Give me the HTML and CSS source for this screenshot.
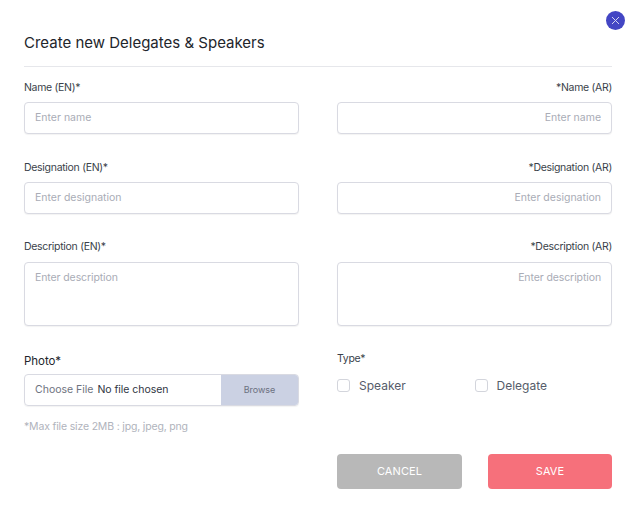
FILE: index.html
```html
<!DOCTYPE html>
<html lang="en">
<head>
<meta charset="utf-8">
<title>Create new Delegates &amp; Speakers</title>
<link rel="stylesheet" href="styles.css">
</head>
<body>
<div class="modal">
  <button class="close" type="button" aria-label="Close">
    <svg width="9" height="9" viewBox="0 0 9 9"><path d="M1 1l7 7M8 1L1 8" stroke="#d5d6f0" stroke-width="1" fill="none"/></svg>
  </button>
  <h1 class="title">Create new Delegates &amp; Speakers</h1>
  <form class="form">
    <div class="row row-a">
      <div class="field"><label class="label">Name (EN)*</label><input class="input" placeholder="Enter name"></div>
      <div class="field rtl"><label class="label">*Name (AR)</label><input class="input" placeholder="Enter name"></div>
    </div>
    <div class="row row-b">
      <div class="field"><label class="label">Designation (EN)*</label><input class="input" placeholder="Enter designation"></div>
      <div class="field rtl"><label class="label">*Designation (AR)</label><input class="input" placeholder="Enter designation"></div>
    </div>
    <div class="row row-c">
      <div class="field"><label class="label">Description (EN)*</label><textarea class="input area" placeholder="Enter description"></textarea></div>
      <div class="field rtl"><label class="label">*Description (AR)</label><textarea class="input area" placeholder="Enter description"></textarea></div>
    </div>
    <div class="row row-d">
      <div class="field">
        <label class="label photo-label">Photo*</label>
        <div class="file">
          <span class="file-choose">Choose File</span>
          <span class="file-none">No file chosen</span>
          <span class="file-browse">Browse</span>
        </div>
        <p class="hint">*Max file size 2MB : jpg, jpeg, png</p>
      </div>
      <div class="field">
        <label class="label type-label">Type*</label>
        <div class="types">
          <span class="type"><span class="box"></span>Speaker</span>
          <span class="type"><span class="box"></span>Delegate</span>
        </div>
      </div>
    </div>
    <div class="actions">
      <button class="btn cancel" type="button">CANCEL</button>
      <button class="btn save" type="button">SAVE</button>
    </div>
  </form>
</div>
</body>
</html>
```
FILE: styles.css
```css
* { box-sizing: border-box; }
html, body { margin: 0; height: 100%; background: #fff; }
body { font-family: Inter, "Liberation Sans", sans-serif; color: #2f3542; overflow: hidden; }
.modal { position: relative; width: 635px; height: 525px; padding: 33px 23px 0 24px; }
.close { position: absolute; top: 11px; left: 606px; width: 19px; height: 19px; padding: 0; border: 0; border-radius: 50%; background: #4346c4; display: flex; align-items: center; justify-content: center; }
.title { margin: 0; height: 34px; border-bottom: 1px solid #e6e7eb; font-size: 15px; line-height: 20px; font-weight: 400; color: #22252b; }
.form { display: block; }
.row { display: grid; grid-template-columns: 275px 275px; column-gap: 38px; }
.row-a { margin-top: 12px; height: 80px; }
.row-b { height: 80px; }
.row-c { height: 112px; }
.row-d { height: 103px; }
.field { display: flex; flex-direction: column; }
.label { display: block; height: 23px; padding-top: 1px; font-size: 10.5px; line-height: 16px; letter-spacing: -.3px; color: #3a3f4a; }
.row-c .label { padding-top: 0; }
.rtl .label { text-align: right; }
.rtl .input { text-align: right; }
.input { display: block; width: 100%; height: 32px; padding: 0 10px 1px; border: 1px solid #d9dae2; border-radius: 4px; background: #fff; font: 10.5px/16px Inter, sans-serif; color: #333; outline: 0; box-shadow: 0 1px 1px rgba(0,0,0,.05); }
.input::placeholder { color: #a9acb6; opacity: 1; }
.area { height: 64px; padding: 7px 10px; resize: none; letter-spacing: -.1px; }
.label.photo-label { font-size: 11.5px; letter-spacing: -.05px; color: #22252b; height: 23px; padding-top: 2px; }
.file { display: flex; align-items: center; height: 32px; border: 1px solid #d9dae2; border-radius: 4px; font-size: 10.5px; overflow: hidden; box-shadow: 0 1px 1px rgba(0,0,0,.05); padding-left: 10px; }
.file-choose { color: #6e7380; margin-right: 5px; padding-bottom: 1px; }
.file-none { color: #2f3542; flex: 1; letter-spacing: -.05px; margin-left: -1px; padding-bottom: 1px; }
.file-browse { width: 77px; height: 100%; background: #cbd1e3; color: #6b7080; font-size: 9px; display: flex; align-items: center; justify-content: center; padding-bottom: 2px; }
.hint { margin: 14px 0 0; font-size: 10.5px; line-height: 14px; letter-spacing: -.17px; color: #b0b3bc; }
.label.type-label { height: 27px; padding-top: 0; }
.types { display: flex; }
.type { display: flex; align-items: center; width: 138px; font-size: 12px; color: #565c6a; }
.box { width: 13px; height: 13px; margin-right: 9px; border: 1px solid #d3d5dc; border-radius: 3px; background: #fff; }
.actions { display: flex; justify-content: flex-end; gap: 26px; }
.btn { height: 35px; border: 0; border-radius: 4px; color: #fff; font: 11px Inter, sans-serif; letter-spacing: .1px; padding: 0 0 1px; }
.cancel { width: 125px; background: #b8b8b8; }
.save { width: 124px; background: #f6707b; }
```
